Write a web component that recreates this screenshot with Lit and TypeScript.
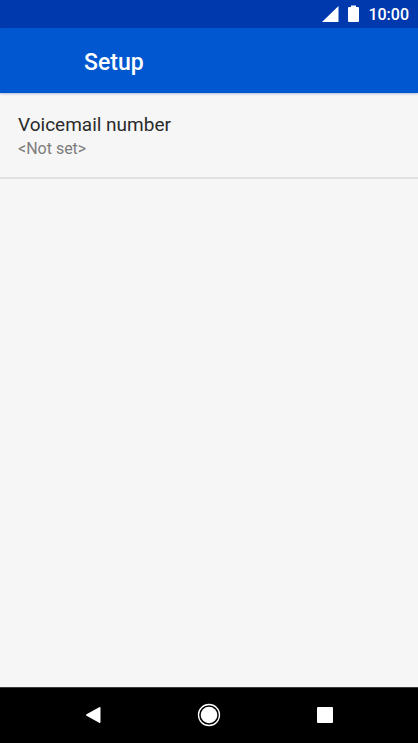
import { LitElement, html, css } from "lit";
import { customElement } from "lit/decorators.js";

@customElement("app-root")
export class AppRoot extends LitElement {
  static styles = css`
    :host {
      display: flex;
      flex-direction: column;
      min-height: 100vh;
      background: #f6f6f6;
      font-family: Roboto, sans-serif;
    }
    .status {
      display: flex;
      align-items: center;
      justify-content: flex-end;
      height: 28px;
      padding-right: 9px;
      background: #0039ae;
      color: #fff;
      font-size: 16px;
      font-weight: 500;
    }
    .status svg {
      display: block;
      margin-right: 9px;
    }
    .bar {
      display: flex;
      align-items: center;
      box-sizing: border-box;
      height: 65px;
      padding: 4px 16px 0 84px;
      background: #0057cf;
      color: #fff;
      box-shadow: 0 1px 2px rgba(0, 60, 140, 0.3);
    }
    h1 {
      margin: 0;
      font-size: 23px;
      font-weight: 500;
      line-height: 28px;
    }
    main {
      flex: 1;
    }
    .item {
      display: block;
      box-sizing: border-box;
      width: 100%;
      padding: 20px 18px 16px;
      border: 0;
      border-bottom: 2px solid #e0e0e0;
      background: none;
      font-family: inherit;
      text-align: left;
    }
    .title,
    .value {
      display: block;
      line-height: 24px;
    }
    .title {
      color: #2a2a2a;
      font-size: 19px;
    }
    .value {
      color: #7c7c7c;
      font-size: 16px;
    }
    .nav {
      display: flex;
      box-sizing: border-box;
      justify-content: center;
      gap: 92px;
      height: 56px;
      background: #000;
      box-shadow: inset 0 1px #3c3c3c;
    }
    .nav button {
      display: grid;
      place-items: center;
      width: 24px;
      padding: 0;
      border: 0;
      background: none;
    }
  `;

  render() {
    return html`
      <header>
        <div class="status">
          <svg width="17" height="18" viewBox="0 0 17 18" fill="#fff" aria-hidden="true"><path d="M16.500 1v16H0z" /></svg>
          <svg width="11" height="18" viewBox="0 0 11 18" fill="#fff" aria-hidden="true"><path d="M3 .500h5V2h2q1 0 1 1v13q0 1-1 1H1q-1 0-1-1V3q0-1 1-1h2z" /></svg>
          <time>10:00</time>
        </div>
        <div class="bar"><h1>Setup</h1></div>
      </header>
      <main>
        <button class="item" type="button">
          <span class="title">Voicemail number</span>
          <span class="value">&lt;Not set&gt;</span>
        </button>
      </main>
      <nav class="nav" aria-label="System navigation">
        <button type="button" aria-label="Back">
          <svg width="24" height="24" viewBox="0 0 24 24" fill="#fff"><path d="M19.500 5v14q0 1.500-1.300 .8L5.500 12.800q-1.200-.8 0-1.600L18.200 4.200q1.300-.7 1.300 .8z" /></svg>
        </button>
        <button type="button" aria-label="Home">
          <svg width="24" height="24" viewBox="0 0 24 24" fill="#fff"><circle cx="12" cy="12" r="8.300" /><circle cx="12" cy="12" r="10.500" fill="none" stroke="#fff" stroke-width="1.300" /></svg>
        </button>
        <button type="button" aria-label="Overview">
          <svg width="24" height="24" viewBox="0 0 24 24" fill="#fff"><rect x="4" y="4" width="16" height="16" rx="1" /></svg>
        </button>
      </nav>
    `;
  }
}
